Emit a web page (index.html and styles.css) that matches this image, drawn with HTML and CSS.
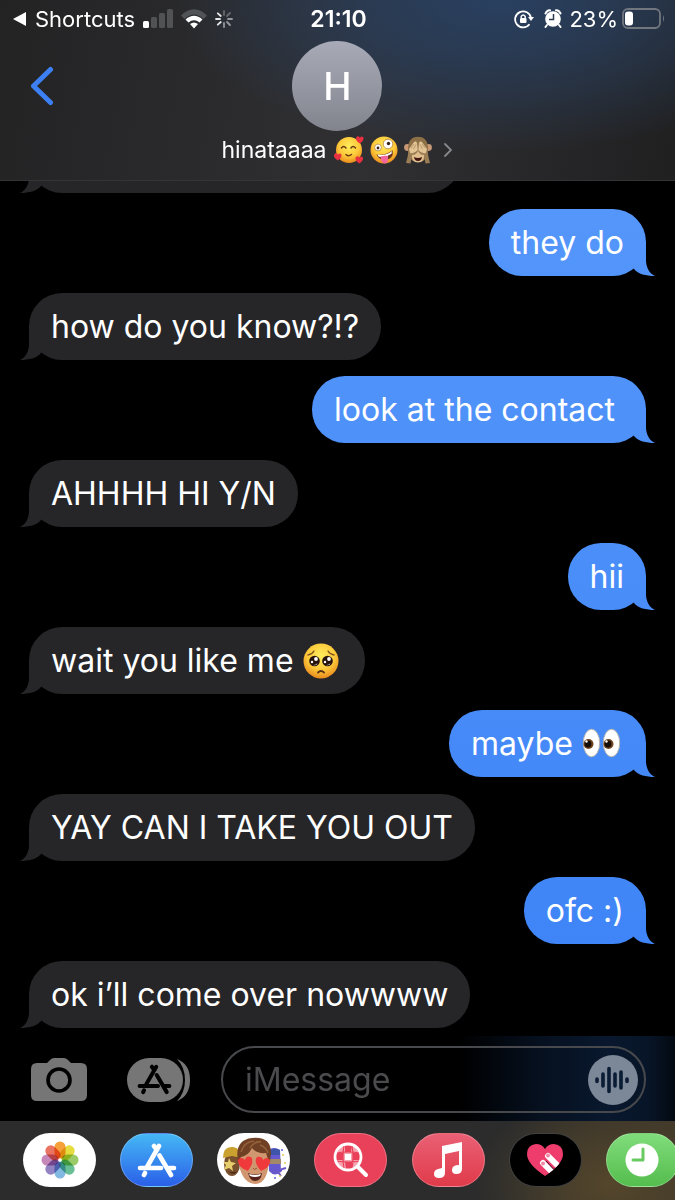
FILE: index.html
```html
<!DOCTYPE html>
<html lang="en">
<head>
<meta charset="utf-8">
<meta name="viewport" content="width=device-width, initial-scale=1">
<title>Messages</title>
<link rel="stylesheet" href="styles.css">
</head>
<body>
<svg class="defs" aria-hidden="true">
  <defs>
    <radialGradient id="face" cx=".5" cy=".35" r=".65"><stop offset="0" stop-color="#ffec5c"/><stop offset=".6" stop-color="#fdc93a"/><stop offset="1" stop-color="#e98b1d"/></radialGradient>
    <symbol id="glyph-store" viewBox="0 0 40 36">
      <g fill="none" stroke="currentColor" stroke-width="4.600" stroke-linecap="round">
        <path d="M22 4 10 25M17 4l3 4M22.500 13.500 34 33M3 26h21M32 26h5M8 31l-1 2"/>
      </g>
    </symbol>
  </defs>
</svg>

<header class="header">
  <div class="status">
    <div class="status-left">
      <svg width="15" height="14" viewBox="0 0 15 14"><path d="M1 7 14 0v14Z" fill="#fff"/></svg>
      <a class="return" href="#">Shortcuts</a>
      <svg width="30" height="20" viewBox="0 0 30 20"><rect y="12" width="6" height="7" rx="1.500" fill="#fff"/><g fill="#515254"><rect x="8" y="8" width="6" height="11" rx="1.500"/><rect x="16" y="4" width="6" height="15" rx="1.500"/><rect x="24" width="6" height="19" rx="1.500"/></g></svg>
      <svg width="26" height="20" viewBox="0 0 26 20"><path d="M0 6.500Q13-6 26 6.500l-3.500 3.500Q13 1 3.500 10Z" fill="#515457"/><path d="M4.500 10.500q8.500-7.500 17 0l-3 3q-5.500-4.500-11 0ZM9 15q4-3 8 0l-4 4.500Z" fill="#fff"/></svg>
      <svg width="18" height="18" viewBox="0 0 18 18" stroke-width="1.800" stroke-linecap="round"><path d="M1 9h4M2.800 3.300l3 2.700M2.800 14.700l3-2.700" stroke="#e8e8e8"/><path d="M9 1v4M12 6l3-3" stroke="#66696c"/><path d="M13 9h4M12 12l3 3M9 13v4" stroke="#96999c"/></svg>
    </div>
    <time class="clock">21:10</time>
    <div class="status-right">
      <svg class="lock" width="20" height="20" viewBox="0 0 20 20"><path d="M15.500 15.200A8 8 0 1 1 17 9" fill="none" stroke="#fff" stroke-width="1.800"/><path d="M14 8h6l-3 4Z" fill="#fff"/><rect x="6" y="9" width="6.500" height="5" rx="1" fill="#fff"/><path d="M7.200 9V7.500q2-3 4 0V9" fill="none" stroke="#fff" stroke-width="1.400"/></svg>
      <svg class="alarm" width="18" height="19" viewBox="0 0 18 19"><circle cx="9" cy="10" r="7.800" fill="#fff"/><path d="m3 16-1.500 2M15 16l1.500 2M1.500 4.500Q3 1 6 1.300M16.500 4.500Q15 1 12 1.300" stroke="#fff" stroke-width="2" fill="none" stroke-linecap="round"/><path d="M9.500 5v5.500H5" fill="none" stroke="#2c3a50" stroke-width="1.500"/></svg>
      <span>23%</span>
      <svg width="43" height="21" viewBox="0 0 43 21"><rect x="1" y="1" width="37" height="19" rx="5" fill="none" stroke="#72777f" stroke-width="1.800"/><rect x="3" y="3.500" width="8" height="14" rx="3" fill="#fff"/><path d="M41 7q2 3.500 0 7Z" fill="#72777f"/></svg>
    </div>
  </div>
  <div class="contact-bar">
    <button class="back" aria-label="Back"><svg width="24" height="40" viewBox="0 0 24 40"><path d="M20.500 3.500 3.500 20l17 16.500" fill="none" stroke="#3c80f3" stroke-width="5" stroke-linecap="round" stroke-linejoin="round"/></svg></button>
    <a class="contact" href="#">
      <span class="avatar">H</span>
      <span class="name">
        <span class="name-text">hinataaaa</span>
        <svg role="img" aria-label="smiling face with hearts" width="30" height="30" viewBox="0 0 30 30"><circle cx="15" cy="15" r="13" fill="url(#face)"/><path d="M7.500 13q2-3 4.500 0M17 13q2-3 4.500 0M12 19.500q2.500 2.500 5.500 0" fill="none" stroke="#6b3b10" stroke-width="1.500" stroke-linecap="round"/><g fill="#e93142"><path id="heart" d="M26 8.500C20 5 22 1 24 1.200q1.400.1 2 1.500Q27.500.7 29 2q2 3-3 6.500Z"/><use href="#heart" x="-22" y="17"/><use href="#heart" x="-.5" y="20"/></g></svg>
        <svg role="img" aria-label="zany face" width="28" height="28" viewBox="0 0 28 28"><circle cx="14" cy="14" r="13.500" fill="url(#face)"/><circle cx="18" cy="8" r="4.800" fill="#fff" stroke="#ab7428" stroke-width=".7"/><circle cx="8" cy="11.500" r="3.400" fill="#fff" stroke="#ab7428" stroke-width=".7"/><circle cx="18.500" cy="7.500" r="1.700" fill="#3b2418"/><circle cx="8" cy="12" r="1.400" fill="#3b2418"/><path d="M6.500 18.500Q16 20 22.500 14q1.500 8-5 9.500Q9.500 25 6.500 18.500Z" fill="#653018"/><path d="M7.500 18.600Q16 20 22 15l-.5 2.800Q15 22.500 8.500 20.500Z" fill="#fff"/><path d="M10.500 20.500q4-1 7.500-.5.500 7.500-3 7.500-4 0-4.500-7Z" fill="#f4679c"/></svg>
        <svg role="img" aria-label="see-no-evil monkey" width="28" height="28" viewBox="0 0 28 28"><circle cx="3.500" cy="11.500" r="3.400" fill="#c99976"/><circle cx="24.500" cy="11.500" r="3.400" fill="#c99976"/><path d="M4 13Q4 1 14 .8 24 1 24 13q0 13-10 13T4 13Z" fill="#8d7046"/><path d="M8 16q6-3 12 0 2 10-6 10.500Q6 26 8 16Z" fill="#dfbd8d"/><path d="M10 21q4 1.800 8 0-.5 4-4 4t-4-4Z" fill="#3e1510"/><path d="M2 27Q4 20 4.500 15L12 5.800q2-.3 1.500 2l.8 6.200Q13 19 8 19l-1.500 8.500ZM26 27q-2-7-2.500-12L16 5.800q-2-.3-1.500 2l-.8 6.200Q15 19 20 19l1.500 8.500Z" fill="#9b7e55"/><path d="m5 13 5-7 2-.7 1 2 .7 6.700q-3 4-7.500 3Zm18 0-5-7-2-.7-1 2-.7 6.700q3 4 7.500 3Z" fill="#e1c394"/><path d="m7 12 3-4M9.500 13 12 8.500M21 12l-3-4M18.500 13 16 8.500" stroke="#ae8f61" stroke-width=".8"/></svg>
        <svg class="more" width="10" height="16" viewBox="0 0 10 16"><path d="m2 2 6 6-6 6" fill="none" stroke="#86888c" stroke-width="1.800" stroke-linecap="round"/></svg>
      </span>
    </a>
  </div>
</header>

<main class="thread">
  <ol class="messages">
    <li class="bubble received clipped" aria-hidden="true"></li>
    <li class="bubble sent">they do</li>
    <li class="bubble received">how do you know?!?</li>
    <li class="bubble sent">look at the contact&nbsp;</li>
    <li class="bubble received">AHHHH HI Y/N</li>
    <li class="bubble sent">hii</li>
    <li class="bubble received">wait you like me <svg class="emoji" role="img" aria-label="pleading face" width="40" height="36" viewBox="2 0 40 36"><circle cx="20" cy="18" r="17.500" fill="url(#face)"/><circle cx="13.500" cy="18" r="5.300" fill="#27120c"/><circle cx="26.500" cy="18" r="5.300" fill="#27120c"/><g fill="#fff"><circle cx="15" cy="16" r="1.900"/><circle cx="28" cy="16" r="1.900"/><circle cx="11" cy="19" r="1.200"/><circle cx="24" cy="19" r="1.200"/><path d="M12 22q3 .5 4.500-2-.5 3-4.500 2ZM25 22q3 .5 4.500-2-.5 3-4.500 2Z"/></g><path d="M7 12q4-.5 6-4M33 12q-4-.5-6-4" fill="none" stroke="#80511d" stroke-width="1.400" stroke-linecap="round"/><path d="M17 29.500q3-3 6 0" fill="none" stroke="#573015" stroke-width="1.800" stroke-linecap="round"/></svg></li>
    <li class="bubble sent">maybe <svg class="emoji" role="img" aria-label="eyes" width="42" height="36" viewBox="1 0 42 36"><g stroke="#b8b3ae" stroke-width="1"><ellipse cx="10.500" cy="17" rx="8.200" ry="13.800" fill="#fff"/><ellipse cx="30.500" cy="17" rx="8.200" ry="13.800" fill="#fff"/></g><g fill="#70451e"><circle cx="7.500" cy="18" r="5"/><circle cx="27.500" cy="18" r="5"/></g><g fill="#160d07"><circle cx="7" cy="18" r="3.400"/><circle cx="27" cy="18" r="3.400"/></g><g fill="#fff"><circle cx="5.500" cy="15.500" r="1.200"/><circle cx="25.500" cy="15.500" r="1.200"/></g></svg></li>
    <li class="bubble received">YAY CAN I TAKE YOU OUT</li>
    <li class="bubble sent">ofc :)</li>
    <li class="bubble received">ok i’ll come over nowwww</li>
  </ol>
</main>

<footer>
  <form class="composer">
    <button class="camera" type="button" aria-label="Camera"><svg width="56" height="44" viewBox="0 0 56 44"><path d="M6 5h10l3-3q2-2 4-2h10q2 0 4 2l3 3h10q6 0 6 6v26q0 6-6 6H6q-6 0-6-6V11q0-6 6-6Z" fill="#767676"/><circle cx="28" cy="22" r="11" fill="none" stroke="#000" stroke-width="3.600"/></svg></button>
    <button class="apps-toggle" type="button" aria-label="Apps"><svg width="64" height="46" viewBox="0 0 64 46"><rect y="1" width="56" height="44" rx="22" fill="#767676"/><path d="M50 2q13 5 13 21T50 44q8-8 8-21T50 2Z" fill="#767676"/><use href="#glyph-store" x="10" y="6" width="35" height="32" color="#000"/></svg></button>
    <div class="field">
      <input type="text" aria-label="iMessage" placeholder="iMessage">
      <button class="audio" type="button" aria-label="Record audio"><svg width="50" height="50" viewBox="0 0 50 50"><circle cx="25" cy="25" r="25" fill="#7c8797"/><path d="M9 24v2.500M15 19v12M21 13.500v23M27 19v12M33 17v16M39 24v2.500" stroke="#0b1c35" stroke-width="3.600" stroke-linecap="round"/></svg></button>
    </div>
  </form>
  <nav class="drawer" aria-label="iMessage apps">
    <button class="app photos" aria-label="Photos"><svg width="38" height="38" viewBox="-19 -19 38 38"><g class="petals"><rect x="-5.500" y="-18.500" width="11" height="17" rx="5.500" fill="#f5a03a"/><rect x="-5.500" y="-18.500" width="11" height="17" rx="5.500" fill="#e6dc3f" transform="rotate(45)"/><rect x="-5.500" y="-18.500" width="11" height="17" rx="5.500" fill="#9acb68" transform="rotate(90)"/><rect x="-5.500" y="-18.500" width="11" height="17" rx="5.500" fill="#68bf96" transform="rotate(135)"/><rect x="-5.500" y="-18.500" width="11" height="17" rx="5.500" fill="#82b9e3" transform="rotate(180)"/><rect x="-5.500" y="-18.500" width="11" height="17" rx="5.500" fill="#9383c3" transform="rotate(225)"/><rect x="-5.500" y="-18.500" width="11" height="17" rx="5.500" fill="#c688b8" transform="rotate(270)"/><rect x="-5.500" y="-18.500" width="11" height="17" rx="5.500" fill="#ea7462" transform="rotate(315)"/></g><circle r="1.600" fill="#fff"/></svg></button>
    <button class="app store" aria-label="App Store"><svg width="40" height="36" viewBox="0 0 40 36"><use href="#glyph-store" width="40" height="36" color="#fff"/></svg></button>
    <button class="app memoji" aria-label="Memoji"><svg width="72" height="54" viewBox="0 0 72 54">
      <path d="M50 17q6-4 12 0l1 21q-6 7-12 0Z" fill="#6659cf"/><path d="M52 17q5-3 10 0v5H51Z" fill="#3f55aa"/><path d="M51 26h12v5H51Z" fill="#a28a68"/><path d="M55 38q7 3 9-2l4-1M60 39l3 4" stroke="#6a56c8" stroke-width="2" fill="none"/><g fill="#e9c84b"><circle cx="65" cy="22" r="1"/><circle cx="67" cy="30" r="1"/><circle cx="62" cy="43" r="1"/></g><g fill="#5c62dc"><circle cx="64" cy="17" r="1"/><circle cx="57" cy="45" r="1"/></g>
      <ellipse cx="14" cy="31" rx="8" ry="12" fill="#79502e"/><path d="M5 25q0-12 10-11 8 1 8 11l-9-2Z" fill="#caa12e"/><path d="m11 25 2 4 5 1-4 3 1 5-4-3-5 2 2-5-3-3h5Z" fill="#e6ce6c"/><path d="M10 38q5 3 9 0-3 5-9 0Z" fill="#31160d"/>
      <path d="M21 22q1-12 15-12t15 12l-1 14q-3 15-13 15-11-1-15-15Z" fill="#cf966f"/>
      <path d="M20 29Q16 7 34 5q19-2 19 15l-1 9q-3-4-4-9-9 1-14-5-4 8-11 9Z" fill="#704024"/>
      <path d="M23 19q3-10 13-11M32 15q4-7 11-6M42 12q6 2 8 8" fill="none" stroke="#94603a" stroke-width="1.500"/>
      <path id="eye-heart" d="M30 38Q19 34 20 27q3-4 7 0 1-5 6-3 4 4-3 14Z" fill="#f0393a"/><path d="M43 38q-8-9-4-14 5-1 6 3 4-4 7 0 1 7-9 11Z" fill="#f0393a"/><path d="M30 40q7 3 14 0-1 8-7 8-5 0-7-8Z" fill="#55231b"/><path d="M31 41q6 2 12 0l-1 2q-5 2-10 0Z" fill="#fff"/><path d="M35 35q1 3 4 0" stroke="#94583b" fill="none"/>
    </svg></button>
    <button class="app images" aria-label="#images"><svg width="36" height="36" viewBox="0 0 36 36"><circle cx="15" cy="15" r="12.500" fill="#f6a3ad"/><g fill="#e9415a"><path d="M12 3h7l-1 7h-6ZM3 11h7v7H3ZM20 11h7v7h-7ZM12 20h7v7h-6Z"/></g><rect x="12" y="12" width="6" height="6" fill="#fff"/><path d="M11 3Q9 15 11 27M19 3q2 12 0 24M3 11q12-2 24 0M3 19q12 2 24 0" fill="none" stroke="#e9415a" stroke-width="1.200"/><circle cx="15" cy="15" r="13" fill="none" stroke="#fff" stroke-width="2.800"/><path d="m25 25 8 8" stroke="#fff" stroke-width="4" stroke-linecap="round"/></svg></button>
    <button class="app music" aria-label="Music"><svg width="30" height="36" viewBox="0 0 30 36"><path d="M9 4 29 0v27q0 5-6 5-4 0-4-4 0-5 7-5V9L12 12v19q0 5-6 5-5 0-5-4 0-4 4-5l4-1Z" fill="#fff"/></svg></button>
    <button class="app touch" aria-label="Digital Touch"><svg width="38" height="34" viewBox="0 0 38 34"><defs><clipPath id="heart-clip"><path d="M19 33Q1 21 1 11 1 2 10 1q6 0 9 5 3-5 9-5 9 1 9 10 0 10-18 22Z"/></clipPath></defs><g clip-path="url(#heart-clip)"><path d="M0 0h38v34H0Z" fill="#ee3d6c"/><path d="m22 13 16 16M17 20l14 14" stroke="#fff" stroke-width="6" stroke-linecap="round"/><path d="m20 18 13 14" stroke="#44132c" stroke-width="1"/><circle cx="22" cy="12.500" r="2" fill="#f28aa5"/><circle cx="17" cy="20.500" r="2" fill="#f28aa5"/></g></svg></button>
    <button class="app clock-app" aria-label="Recents"><svg width="34" height="34" viewBox="0 0 34 34"><circle cx="17" cy="17" r="16.500" fill="#fff"/><path d="M18 6v11H8" fill="none" stroke="#69ca62" stroke-width="3" stroke-linecap="round" stroke-linejoin="round"/></svg></button>
  </nav>
</footer>
</body>
</html>
```
FILE: styles.css
```css
* { box-sizing: border-box; }

body {
  margin: 0;
  height: 100vh;
  display: flex;
  flex-direction: column;
  overflow: hidden;
  background: #000;
  color: #fff;
  font-family: Inter, "Liberation Sans", sans-serif;
}

svg { display: block; flex: none; }
button { padding: 0; border: 0; background: none; color: inherit; font: inherit; }
a { color: inherit; text-decoration: none; }
.defs { position: absolute; width: 0; height: 0; }

/* Header */
.header {
  flex: none;
  padding-bottom: 15px;
  border-bottom: 1px solid #343436;
  background:
    radial-gradient(ellipse 48% 85% at 74% 0, #294060 0%, rgba(41, 62, 92, 0.75) 40%, rgba(41, 62, 92, 0) 100%),
    linear-gradient(100deg, #232324 0%, #303033 55%, #202021 100%);
}

.status {
  display: grid;
  grid-template-columns: 1fr auto 1fr;
  align-items: center;
  height: 37px;
  padding: 0 10px 0 12px;
  font-size: 22px;
}

.status-left, .status-right { display: flex; align-items: center; gap: 8px; }
.status-right { justify-content: flex-end; gap: 4px; }
.lock { margin-right: 6px; }
.alarm { margin-right: 3px; }
.clock { font-size: 23px; font-weight: 600; }

.contact-bar {
  display: grid;
  grid-template-columns: 1fr auto 1fr;
  padding: 4px 30px 0;
}

.back { justify-self: start; align-self: start; padding-top: 25px; }
.contact { display: flex; flex-direction: column; align-items: center; gap: 4px; }

.avatar {
  display: grid;
  place-items: center;
  width: 90px;
  height: 90px;
  border-radius: 50%;
  background: linear-gradient(#a8aab7, #82848d);
  font-size: 38px;
  font-weight: 500;
}

.name { display: flex; align-items: center; gap: 6px; height: 30px; font-size: 23px; }
.name-text { margin-right: 2px; }
.more { margin-left: 5px; }

/* Conversation */
.thread {
  flex: 1;
  min-height: 0;
  overflow: hidden;
  display: flex;
  flex-direction: column;
  justify-content: flex-end;
}

.messages {
  display: flex;
  flex-direction: column;
  margin: 0;
  padding: 0 29px 8px;
  list-style: none;
}

.bubble {
  position: relative;
  flex: none;
  max-width: 75%;
  min-height: 67px;
  padding: 12px 22px 11px;
  border-radius: 33px;
  font-size: 32px;
  line-height: 44px;
}

.bubble::after {
  content: "";
  position: absolute;
  bottom: 0;
  width: 31px;
  height: 34px;
  background: inherit;
  clip-path: path("M22 0 V18 C22 26 26 32 31 34 C22 34 14 32 10 27 L0 14 L12 0 Z");
}

.received { align-self: flex-start; margin-bottom: 16px; background: #262629; }
.received::after { left: -9px; transform: scaleX(-1); }
.sent {
  align-self: flex-end;
  margin-bottom: 17px;
  background: linear-gradient(#5a9bfb, #387ff6) fixed;
}
.sent::after { right: -9px; }
.received:last-child { margin-bottom: 0; }
.clipped { width: 70%; }
.emoji { display: inline-block; vertical-align: -7px; }

/* Composer */
.composer {
  display: flex;
  align-items: center;
  height: 85px;
  padding: 2px 29px 0 31px;
  background: linear-gradient(90deg, #000 68%, #06101f 80%, #09182e 90%, #081528 96%, #030911 100%);
}

.camera { margin-right: 40px; }
.apps-toggle { margin-right: 30px; }

.field {
  flex: 1;
  min-width: 0;
  display: flex;
  align-items: center;
  height: 67px;
  padding: 0 6px 0 22px;
  border: 2px solid #48494c;
  border-radius: 34px;
}

.field input {
  flex: 1;
  min-width: 0;
  padding: 0;
  border: 0;
  outline: 0;
  background: none;
  color: #fff;
  font: inherit;
  font-size: 32px;
}
.field input::placeholder { color: #4b4b4e; opacity: 1; }

/* App drawer */
.drawer {
  display: flex;
  justify-content: space-between;
  height: 79px;
  margin-right: -4px;
  padding: 12px 0 0 23px;
  background:
    radial-gradient(ellipse 20% 120% at 90% 80%, #54462b 0%, rgba(84, 70, 43, 0) 100%),
    linear-gradient(90deg, #2c2c2c 75%, #3e372a 100%);
}

.app {
  display: grid;
  place-items: center;
  flex: none;
  width: 73px;
  height: 54px;
  border: 1px solid rgba(255, 255, 255, 0.25);
  border-radius: 27px;
  overflow: hidden;
}
.photos, .memoji { border: 0; background: #fff; }
.petals rect { mix-blend-mode: multiply; }
.store { background: linear-gradient(#45b8f5, #2a5fe8); }
.images { background: #e9415a; }
.music { background: linear-gradient(#ea6075, #e03b4a); }
.touch { background: #000; }
.clock-app { background: linear-gradient(#80dc7b, #55bd4e); }
```
